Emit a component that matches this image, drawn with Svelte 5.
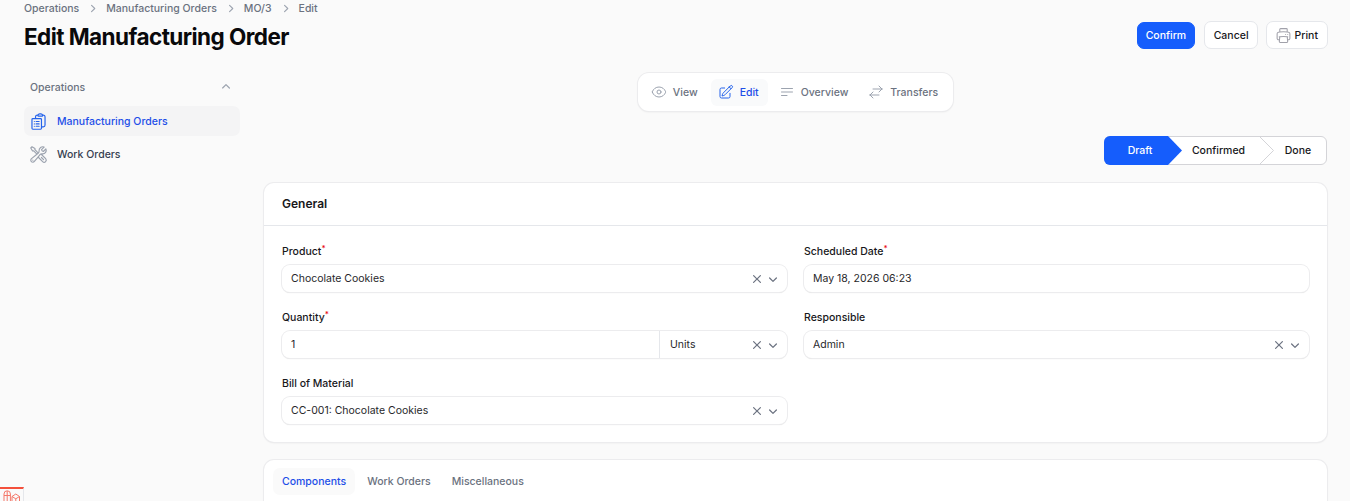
<script>
	const crumbs = ['Operations', 'Manufacturing Orders', 'MO/3', 'Edit'];
	const tabs = ['Components', 'Work Orders', 'Miscellaneous'];
</script>

{#snippet xIcon()}
	<svg class="x" viewBox="0 0 20 20" fill="currentColor"><path d="M6.28 5.22a.75.75 0 0 0-1.06 1.06L8.94 10l-3.72 3.72a.75.75 0 1 0 1.06 1.06L10 11.06l3.72 3.72a.75.75 0 1 0 1.06-1.06L11.06 10l3.72-3.72a.75.75 0 0 0-1.06-1.06L10 8.94 6.28 5.22Z" /></svg>
{/snippet}

{#snippet chevron()}
	<svg class="chev" viewBox="0 0 20 20" fill="currentColor"><path fill-rule="evenodd" d="M5.22 8.22a.75.75 0 0 1 1.06 0L10 11.94l3.72-3.72a.75.75 0 1 1 1.06 1.06l-4.25 4.25a.75.75 0 0 1-1.06 0L5.22 9.28a.75.75 0 0 1 0-1.06Z" clip-rule="evenodd" /></svg>
{/snippet}

<div class="page">
	<header class="head">
		<div>
			<nav class="crumbs">
				{#each crumbs as crumb, i}
					{#if i > 0}
						<svg viewBox="0 0 20 20" fill="currentColor"><path fill-rule="evenodd" d="M8.22 5.22a.75.75 0 0 1 1.06 0l4.25 4.25a.75.75 0 0 1 0 1.06l-4.25 4.25a.75.75 0 0 1-1.06-1.06L11.94 10 8.22 6.28a.75.75 0 0 1 0-1.06Z" clip-rule="evenodd" /></svg>
					{/if}
					<span>{crumb}</span>
				{/each}
			</nav>
			<h1>Edit Manufacturing Order</h1>
		</div>
		<div class="actions">
			<button class="btn primary">Confirm</button>
			<button class="btn">Cancel</button>
			<button class="btn print-btn">
				<svg class="print" viewBox="0 0 24 24" fill="none" stroke="currentColor" stroke-width="1.5"><path stroke-linecap="round" stroke-linejoin="round" d="M6.72 13.829c-.24.03-.48.062-.72.096m.72-.096a42.415 42.415 0 0 1 10.56 0m-10.56 0L6.34 18m10.94-4.171c.24.03.48.062.72.096m-.72-.096L17.66 18m0 0 .229 2.523a1.125 1.125 0 0 1-1.12 1.227H7.231c-.662 0-1.18-.568-1.12-1.227L6.34 18m11.318 0h1.091A2.25 2.25 0 0 0 21 15.75V9.456c0-1.081-.768-2.015-1.837-2.175a48.055 48.055 0 0 0-1.913-.247M6.34 18H5.25A2.25 2.25 0 0 1 3 15.75V9.456c0-1.081.768-2.015 1.837-2.175a48.041 48.041 0 0 1 1.913-.247m10.5 0a48.536 48.536 0 0 0-10.5 0m10.5 0V3.375c0-.621-.504-1.125-1.125-1.125h-8.25c-.621 0-1.125.504-1.125 1.125v3.659M18 10.5h.008v.008H18V10.5Zm-3 0h.008v.008H15V10.5Z" /></svg>
				Print
			</button>
		</div>
	</header>

	<div class="layout">
		<aside class="side">
			<div class="group">
				<span>Operations</span>
				<svg viewBox="0 0 20 20" fill="currentColor"><path fill-rule="evenodd" d="M14.78 11.78a.75.75 0 0 1-1.06 0L10 8.06l-3.72 3.72a.75.75 0 0 1-1.06-1.06l4.25-4.25a.75.75 0 0 1 1.06 0l4.25 4.25a.75.75 0 0 1 0 1.06Z" clip-rule="evenodd" /></svg>
			</div>
			<a class="item active">
				<svg viewBox="0 0 24 24" fill="none" stroke="currentColor" stroke-width="1.5" stroke-linecap="round" stroke-linejoin="round"><path d="M9 12h3.75M9 15h3.75M9 18h3.75m3 .75H18a2.25 2.25 0 0 0 2.25-2.25V6.108c0-1.135-.845-2.098-1.976-2.192a48.424 48.424 0 0 0-1.123-.08m-5.801 0c-.065.21-.1.433-.1.664 0 .414.336.75.75.75h4.5a.75.75 0 0 0 .75-.75 2.25 2.25 0 0 0-.1-.664m-5.8 0A2.251 2.251 0 0 1 13.5 2.25H15c1.012 0 1.867.668 2.15 1.586m-5.8 0c-.376.023-.75.05-1.124.08C9.095 4.01 8.25 4.973 8.25 6.108V8.25m0 0H4.875c-.621 0-1.125.504-1.125 1.125v11.25c0 .621.504 1.125 1.125 1.125h9.75c.621 0 1.125-.504 1.125-1.125V9.375c0-.621-.504-1.125-1.125-1.125H8.25ZM6.75 12h.008v.008H6.75V12Zm0 3h.008v.008H6.75V15Zm0 3h.008v.008H6.75V18Z" /></svg>
				Manufacturing Orders
			</a>
			<a class="item">
				<svg viewBox="0 0 24 24" fill="none" stroke="currentColor" stroke-width="1.5" stroke-linecap="round" stroke-linejoin="round"><path d="M11.42 15.17 17.25 21A2.652 2.652 0 0 0 21 17.25l-5.877-5.877M11.42 15.17l2.496-3.03c.317-.384.74-.626 1.208-.766M11.42 15.17l-4.655 5.653a2.548 2.548 0 1 1-3.586-3.586l6.837-5.63m5.108-.233c.55-.164 1.163-.188 1.743-.14a4.5 4.5 0 0 0 4.486-6.336l-3.276 3.277a3.004 3.004 0 0 1-2.25-2.25l3.276-3.276a4.5 4.5 0 0 0-6.336 4.486c.091 1.076-.071 2.264-.904 2.95l-.102.085m-1.745 1.437L5.909 7.5H4.5L2.25 3.75l1.5-1.5L7.5 4.5v1.409l4.26 4.26m-1.745 1.437 1.745-1.437m6.615 8.206L15.75 15.75M4.867 19.125h.008v.008h-.008v-.008Z" /></svg>
				Work Orders
			</a>
		</aside>

		<main class="main">
			<div class="subnav-wrap">
				<nav class="subnav">
					<a class="sub">
						<svg viewBox="0 0 24 24" fill="none" stroke="currentColor" stroke-width="1.5"><path stroke-linecap="round" stroke-linejoin="round" d="M2.036 12.322a1.012 1.012 0 0 1 0-.639C3.423 7.51 7.36 4.5 12 4.5c4.638 0 8.573 3.007 9.963 7.178.07.207.07.431 0 .639C20.577 16.49 16.64 19.5 12 19.5c-4.638 0-8.573-3.007-9.963-7.178Z" /><path stroke-linecap="round" stroke-linejoin="round" d="M15 12a3 3 0 1 1-6 0 3 3 0 0 1 6 0Z" /></svg>
						View
					</a>
					<a class="sub active">
						<svg viewBox="0 0 24 24" fill="none" stroke="currentColor" stroke-width="1.5"><path stroke-linecap="round" stroke-linejoin="round" d="m16.862 4.487 1.687-1.688a1.875 1.875 0 1 1 2.652 2.652L10.582 16.07a4.5 4.5 0 0 1-1.897 1.13L6 18l.8-2.685a4.5 4.5 0 0 1 1.13-1.897l8.932-8.931Zm0 0L19.5 7.125M18 14v4.75A2.25 2.25 0 0 1 15.75 21H5.25A2.25 2.25 0 0 1 3 18.75V8.25A2.25 2.25 0 0 1 5.25 6H10" /></svg>
						Edit
					</a>
					<a class="sub">
						<svg viewBox="0 0 24 24" fill="none" stroke="currentColor" stroke-width="1.5"><path stroke-linecap="round" stroke-linejoin="round" d="M3.75 6.75h16.5M3.75 12h16.5M3.75 17.25H12" /></svg>
						Overview
					</a>
					<a class="sub">
						<svg viewBox="0 0 24 24" fill="none" stroke="currentColor" stroke-width="1.5"><path stroke-linecap="round" stroke-linejoin="round" d="M7.5 21 3 16.5m0 0L7.5 12M3 16.5h13.5m0-13.5L21 7.5m0 0L16.5 12M21 7.5H7.5" /></svg>
						Transfers
					</a>
				</nav>
			</div>

			<div class="steps-wrap">
				<div class="steps">
					<div class="step draft">Draft</div>
					<div class="step confirmed">Confirmed</div>
					<div class="step done">
						<svg class="sep" viewBox="0 0 14 27" fill="none" stroke="#d4d4d8"><path d="M0 0 13.5 13.5 0 27" /></svg>
						Done
					</div>
				</div>
			</div>

			<section class="card">
				<h2>General</h2>
				<div class="form">
					<div class="field">
						<span class="label">Product<sup>*</sup></span>
						<div class="input">
							<span class="value">Chocolate Cookies</span>
							{@render xIcon()}{@render chevron()}
						</div>
					</div>
					<div class="field">
						<span class="label">Scheduled Date<sup>*</sup></span>
						<div class="input"><span class="value">May 18, 2026 06:23</span></div>
					</div>
					<div class="field">
						<span class="label">Quantity<sup>*</sup></span>
						<div class="input">
							<span class="value">1</span>
							<div class="unit">
								<span class="value">Units</span>
								{@render xIcon()}{@render chevron()}
							</div>
						</div>
					</div>
					<div class="field">
						<span class="label">Responsible</span>
						<div class="input">
							<span class="value">Admin</span>
							{@render xIcon()}{@render chevron()}
						</div>
					</div>
					<div class="field">
						<span class="label">Bill of Material</span>
						<div class="input">
							<span class="value">CC-001: Chocolate Cookies</span>
							{@render xIcon()}{@render chevron()}
						</div>
					</div>
				</div>
			</section>

			<section class="card tabs-card">
				<div class="tabs">
					{#each tabs as tab, i}
						<span class="tab" class:active={i === 0}>{tab}</span>
					{/each}
				</div>
			</section>
		</main>
	</div>

	<div class="debug">
		<svg viewBox="0 0 20 12" fill="none" stroke="#f4786a" stroke-width="1"><path d="M4 12V5a3.2 3.2 0 0 1 6.4 0v7M7.2 2v10M4 6.5h6.4M12 12V7.5L15.8 5l3.7 2.5V12M12 7.5l3.8 2.3 3.7-2.3M15.8 9.8V12" /></svg>
	</div>
</div>

<style>
	:global(body) {
		margin: 0;
		background: #fafafa;
		font-family: Inter, 'Liberation Sans', sans-serif;
		overflow: hidden;
	}

	.page {
		position: relative;
		height: 501px;
		overflow: hidden;
		padding: 0 23px 0 24px;
		box-sizing: border-box;
	}

	.head {
		display: flex;
		justify-content: space-between;
		margin-top: -1px;
	}

	.crumbs {
		display: flex;
		align-items: center;
		gap: 6px;
		height: 18px;
		font-size: 10.5px;
		font-weight: 500;
		color: #6b7280;
	}

	.crumbs svg {
		width: 15px;
		height: 15px;
		color: #9ca3af;
	}

	h1 {
		margin: 6px 0 0;
		font-size: 22.5px;
		line-height: 28px;
		font-weight: 700;
		letter-spacing: -0.56px;
		color: #09090b;
	}

	.actions {
		display: flex;
		gap: 8px;
		padding-top: 22px;
		margin-right: -1px;
		align-items: flex-start;
	}

	.btn {
		display: flex;
		align-items: center;
		height: 28px;
		padding: 0 8.5px;
		border: 1px solid #e5e7eb;
		border-radius: 7px;
		background: #fff;
		font: 500 10.5px Inter, sans-serif;
		color: #18181b;
	}

	.btn.primary {
		height: 27px;
		margin: 1px 1px 0 0;
		padding: 0 8px;
		background: #155dfc;
		border-color: #155dfc;
		color: #fff;
	}

	.btn.print-btn {
		gap: 2.5px;
		padding: 0 9px 0 8px;
	}

	.print {
		width: 17px;
		height: 17px;
		color: #a1a1aa;
	}

	.layout {
		display: flex;
		margin-top: 21px;
	}

	.side {
		width: 216px;
		flex: none;
		margin-right: 24px;
		padding-top: 3px;
	}

	.group {
		display: flex;
		justify-content: space-between;
		align-items: center;
		height: 24px;
		padding: 0 6px;
		font-size: 10.5px;
		font-weight: 500;
		color: #6b7280;
		margin-bottom: 7px;
	}

	.group svg {
		width: 16px;
		height: 16px;
		color: #9ca3af;
	}

	.item {
		display: flex;
		align-items: center;
		gap: 9px;
		height: 30px;
		padding: 0 5px;
		margin-bottom: 3px;
		border-radius: 7px;
		font-size: 10.5px;
		font-weight: 500;
		color: #374151;
	}

	.item svg {
		width: 19px;
		height: 19px;
		color: #9ca3af;
	}

	.item.active {
		background: #f4f4f5;
		color: #1e4fe8;
	}

	.item.active svg {
		color: #2563eb;
	}

	.main {
		flex: 1;
		min-width: 0;
	}

	.subnav-wrap {
		display: flex;
		justify-content: center;
		margin-top: 1px;
	}

	.subnav {
		display: flex;
		align-items: center;
		gap: 4px;
		height: 38px;
		padding: 0 6px;
		background: #fff;
		border-radius: 11px;
		box-shadow: 0 0 0 1px #ececee, 0 1px 2px rgba(0, 0, 0, 0.1);
		box-sizing: border-box;
	}

	.sub {
		display: flex;
		align-items: center;
		gap: 6px;
		height: 27px;
		padding: 0 9px 0 7px;
		border-radius: 6px;
		font-size: 10.5px;
		font-weight: 500;
		color: #6b7280;
	}

	.sub svg {
		width: 16px;
		height: 16px;
		color: #9ca3af;
	}

	.sub.active {
		background: #f9fafb;
		color: #1e4fe8;
	}

	.sub.active svg {
		color: #2563eb;
	}

	.steps-wrap {
		display: flex;
		justify-content: flex-end;
		margin-top: 25px;
	}

	.steps {
		display: flex;
		height: 29px;
		width: 223px;
		box-sizing: border-box;
		border: 1px solid #d4d4d8;
		border-radius: 6px;
		background: #fff;
		font-size: 10.5px;
		font-weight: 500;
		color: #18181b;
	}

	.step {
		position: relative;
		display: flex;
		align-items: center;
		justify-content: center;
	}

	.draft {
		width: 64px;
		padding-left: 8px;
		box-sizing: border-box;
		margin: -1px 0 -1px -1px;
		background: #155dfc;
		border-radius: 6px 0 0 6px;
		color: #fff;
	}

	.draft::after {
		content: '';
		position: absolute;
		left: 100%;
		top: 0;
		bottom: 0;
		width: 14px;
		background: #155dfc;
		clip-path: polygon(0 0, 100% 50%, 0 100%);
	}

	.confirmed {
		width: 92px;
		padding-left: 9px;
		box-sizing: border-box;
	}

	.done {
		flex: 1;
		padding-left: 10px;
	}

	.sep {
		position: absolute;
		left: 0;
		top: 0;
		width: 14px;
		height: 27px;
	}

	.card {
		margin-top: 18px;
		background: #fff;
		border-radius: 10px;
		box-shadow: 0 0 0 1px #ececee, 0 1px 2px rgba(0, 0, 0, 0.1);
	}

	h2 {
		margin: 0;
		height: 43px;
		padding: 0 18px;
		line-height: 42px;
		box-sizing: border-box;
		border-bottom: 1px solid #e5e7eb;
		font-size: 12px;
		font-weight: 600;
		color: #18181b;
	}

	.form {
		display: grid;
		grid-template-columns: 1fr 1fr;
		column-gap: 17px;
		row-gap: 19px;
		padding: 19px 18px 18px;
	}

	.label {
		display: block;
		height: 14px;
		line-height: 14px;
		margin-bottom: 6px;
		font-size: 10.5px;
		font-weight: 500;
		color: #18181b;
	}

	sup {
		color: #e7000b;
		font-size: 8px;
		line-height: 0;
	}

	.input {
		display: flex;
		align-items: center;
		height: 27px;
		padding-left: 9px;
		padding-right: 6px;
		border-radius: 8px;
		background: #fff;
		box-shadow: 0 0 0 1px #ececee, 0 1px 1px rgba(0, 0, 0, 0.14);
		font-size: 10.5px;
		color: #27272a;
	}

	.value {
		flex: 1;
		min-width: 0;
	}

	.unit {
		display: flex;
		align-items: center;
		width: 128px;
		height: 27px;
		margin-right: -6px;
		padding: 0 6px 0 10px;
		box-sizing: border-box;
		border-left: 1px solid #e5e7eb;
	}

	.x {
		width: 16px;
		height: 16px;
		color: #6b7280;
	}

	.chev {
		width: 16px;
		height: 16px;
		color: #6b7280;
	}

	.tabs-card {
		height: 60px;
	}

	.tabs {
		display: flex;
		gap: 3px;
		padding: 8px 9px;
	}

	.tab {
		padding: 0 9px;
		height: 27px;
		line-height: 27px;
		border-radius: 7px;
		font-size: 10.5px;
		font-weight: 500;
		color: #6b7280;
	}

	.tab.active {
		background: #fafafa;
		color: #1e4fe8;
	}

	.debug {
		position: absolute;
		left: 0;
		top: 487px;
		width: 24px;
		height: 14px;
		box-sizing: border-box;
		background: #fafafa;
		border-top: 2px solid #f4503c;
		border-right: 1px solid #e5e7eb;
	}

	.debug svg {
		display: block;
		width: 20px;
		height: 12px;
	}
</style>
